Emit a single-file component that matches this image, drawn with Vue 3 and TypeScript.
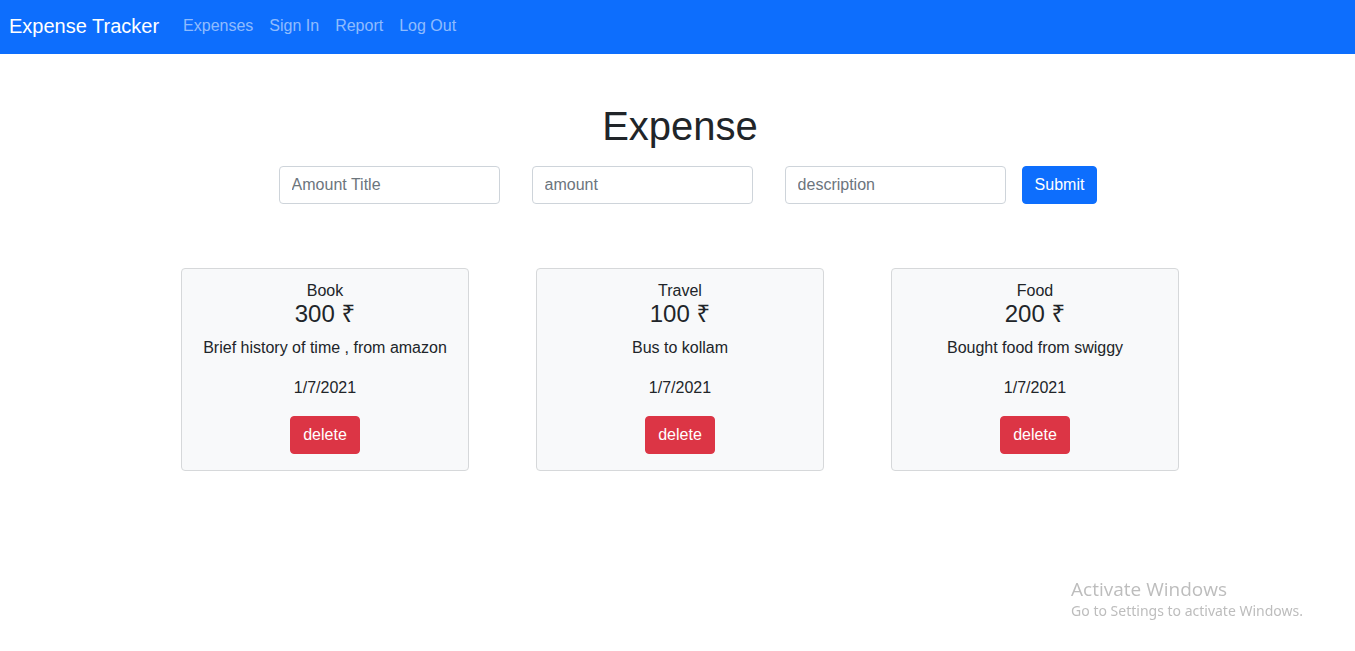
<script setup lang="ts">
import { ref } from 'vue'

interface Expense {
  id: number
  title: string
  amount: number
  description: string
  date: string
}

const links: string[] = ['Expenses', 'Sign In', 'Report', 'Log Out']
const expenses = ref<Expense[]>([
  { id: 1, title: 'Book', amount: 300, description: 'Brief history of time , from amazon', date: '1/7/2021' },
  { id: 2, title: 'Travel', amount: 100, description: 'Bus to kollam', date: '1/7/2021' },
  { id: 3, title: 'Food', amount: 200, description: 'Bought food from swiggy', date: '1/7/2021' },
])
const title = ref('')
const amount = ref('')
const description = ref('')

function addExpense(): void {
  if (!title.value) return
  expenses.value.push({
    id: Date.now(),
    title: title.value,
    amount: Number(amount.value),
    description: description.value,
    date: new Date().toLocaleDateString(),
  })
  title.value = amount.value = description.value = ''
}

function removeExpense(id: number): void {
  expenses.value = expenses.value.filter((e) => e.id !== id)
}
</script>

<template>
  <div class="page">
    <nav class="navbar">
      <a class="brand" href="#">Expense Tracker</a>
      <a v-for="link in links" :key="link" class="nav-link" href="#">{{ link }}</a>
    </nav>
    <main>
      <h1>Expense</h1>
      <form class="entry" @submit.prevent="addExpense">
        <input v-model="title" type="text" placeholder="Amount Title" aria-label="Amount Title" />
        <input v-model="amount" type="text" placeholder="amount" aria-label="amount" />
        <input v-model="description" type="text" placeholder="description" aria-label="description" />
        <button class="btn primary" type="submit">Submit</button>
      </form>
      <section class="cards">
        <article v-for="item in expenses" :key="item.id" class="card">
          <div>{{ item.title }}</div>
          <h4>{{ item.amount }} ₹</h4>
          <p>{{ item.description }}</p>
          <p>{{ item.date }}</p>
          <button class="btn danger" type="button" @click="removeExpense(item.id)">delete</button>
        </article>
      </section>
    </main>
    <aside class="activation">
      <div class="activation-title">Activate Windows</div>
      <div>Go to Settings to activate Windows.</div>
    </aside>
  </div>
</template>

<style>
body {
  margin: 0;
  background: #fff;
}
</style>

<style scoped>
.page,
input,
button {
  font-family: "Liberation Sans", Arial, "Noto Sans", sans-serif;
  font-size: 16px;
  line-height: 24px;
}
.page {
  color: #212529;
}
.page *,
.page {
  box-sizing: border-box;
}
.navbar {
  display: flex;
  align-items: center;
  min-height: 54px;
  padding: 0 9px 2px;
  background: #0d6efd;
}
.brand {
  margin-right: 16px;
  color: #fff;
  font-size: 20px;
  line-height: 30px;
  text-decoration: none;
}
.nav-link {
  padding: 8px;
  color: rgba(255, 255, 255, 0.55);
  text-decoration: none;
}
main {
  padding: 48px 0 0 5px;
}
h1 {
  margin: 0 0 16px;
  font-size: 40px;
  line-height: 48px;
  font-weight: 400;
  text-align: center;
}
.entry {
  display: flex;
  justify-content: center;
  padding-left: 16px;
}
input {
  width: 221px;
  min-width: 0;
  height: 38px;
  margin: 0 32px 0 0;
  padding: 6px 12px;
  border: 1px solid #ced4da;
  border-radius: 4px;
  background: #fff;
  color: #212529;
}
input:last-of-type {
  margin-right: 16px;
}
input::placeholder {
  color: #6c757d;
  opacity: 1;
}
.btn {
  height: 38px;
  padding: 6px 12px;
  border: 1px solid transparent;
  border-radius: 4px;
  color: #fff;
  cursor: pointer;
}
.primary {
  background: #0d6efd;
  border-color: #0d6efd;
}
.danger {
  background: #dc3545;
  border-color: #dc3545;
}
.cards {
  display: grid;
  grid-template-columns: repeat(3, minmax(0, 288px));
  justify-content: center;
  gap: 67px;
  padding-top: 64px;
}
.card {
  padding: 10px 16px 16px;
  border: 1px solid #d6d8da;
  border-radius: 4px;
  background: #f8f9fa;
  text-align: center;
}
h4 {
  margin: 0 0 11px;
  font-size: 24px;
  line-height: 22px;
  font-weight: 400;
}
p {
  margin: 0 0 16px;
}
.activation {
  position: fixed;
  right: 52px;
  bottom: 30px;
  color: #bdbdbd;
  font-family: "Noto Sans", "Open Sans", sans-serif;
  font-size: 14px;
  line-height: 20px;
}
.activation-title {
  font-family: "Open Sans", "Noto Sans", sans-serif;
  font-size: 19px;
  line-height: 24px;
}
</style>
